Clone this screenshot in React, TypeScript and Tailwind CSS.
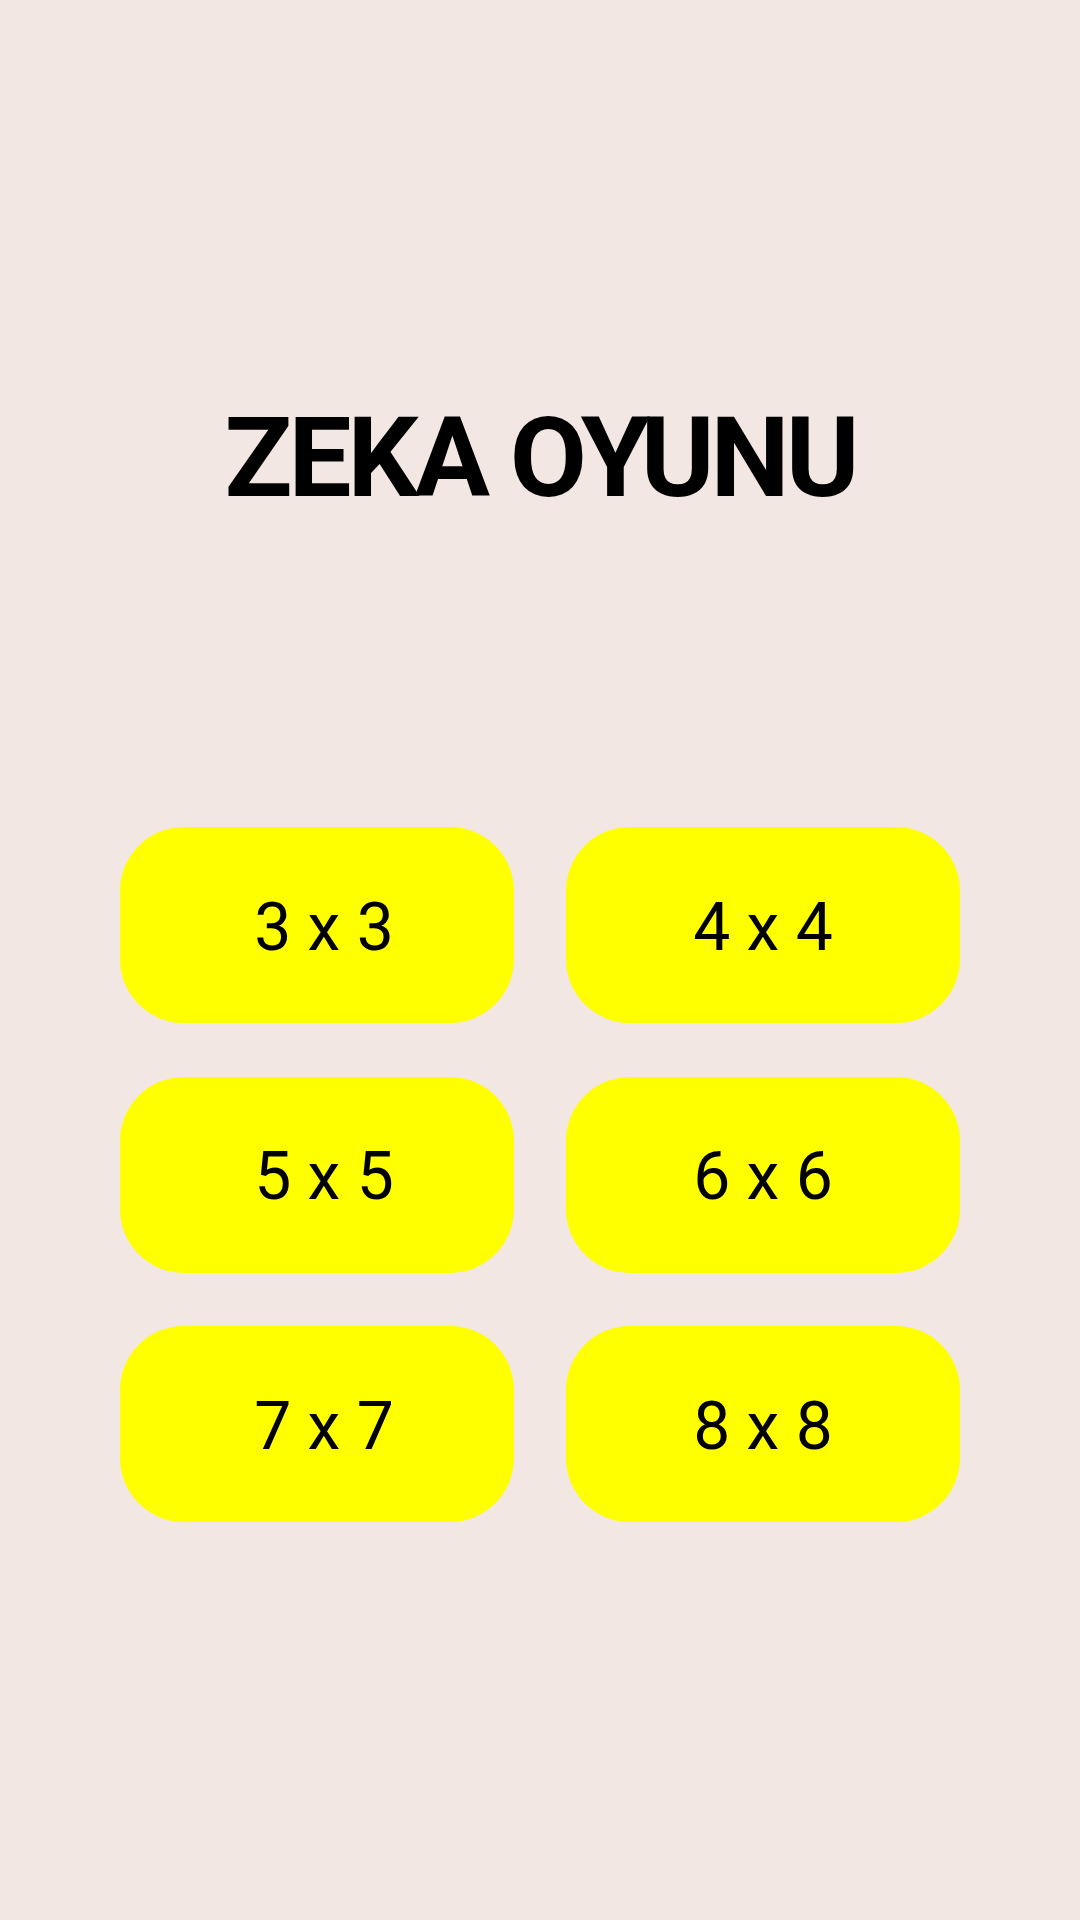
export default function App() {
  const items = ["3 x 3", "4 x 4", "5 x 5", "6 x 6", "7 x 7", "8 x 8"];
  return (
    <div className="w-[1080px] h-[1920px] bg-[#f2e7e2] flex flex-col items-center" style={{ fontFamily: "Roboto, sans-serif" }}>
      <h1 className="mt-[398px] text-[112px] leading-[120px] font-bold text-black tracking-[-4px]">ZEKA OYUNU</h1>
      <div className="mt-[309px] w-full px-[120px] grid grid-cols-2 gap-x-[52px] gap-y-[53.5px]">
        {items.map((t, i) => (
          <button
            key={t}
            className={
              i % 2 === 0
                ? "h-[196px] rounded-[64px] bg-[#ffff00] text-black text-[66px] flex items-center justify-center pl-[14px] pt-[4px]"
                : "h-[196px] rounded-[64px] bg-[#ffff00] text-black text-[66px] flex items-center justify-center pt-[4px]"
            }
          >
            {t}
          </button>
        ))}
      </div>
    </div>
  );
}
